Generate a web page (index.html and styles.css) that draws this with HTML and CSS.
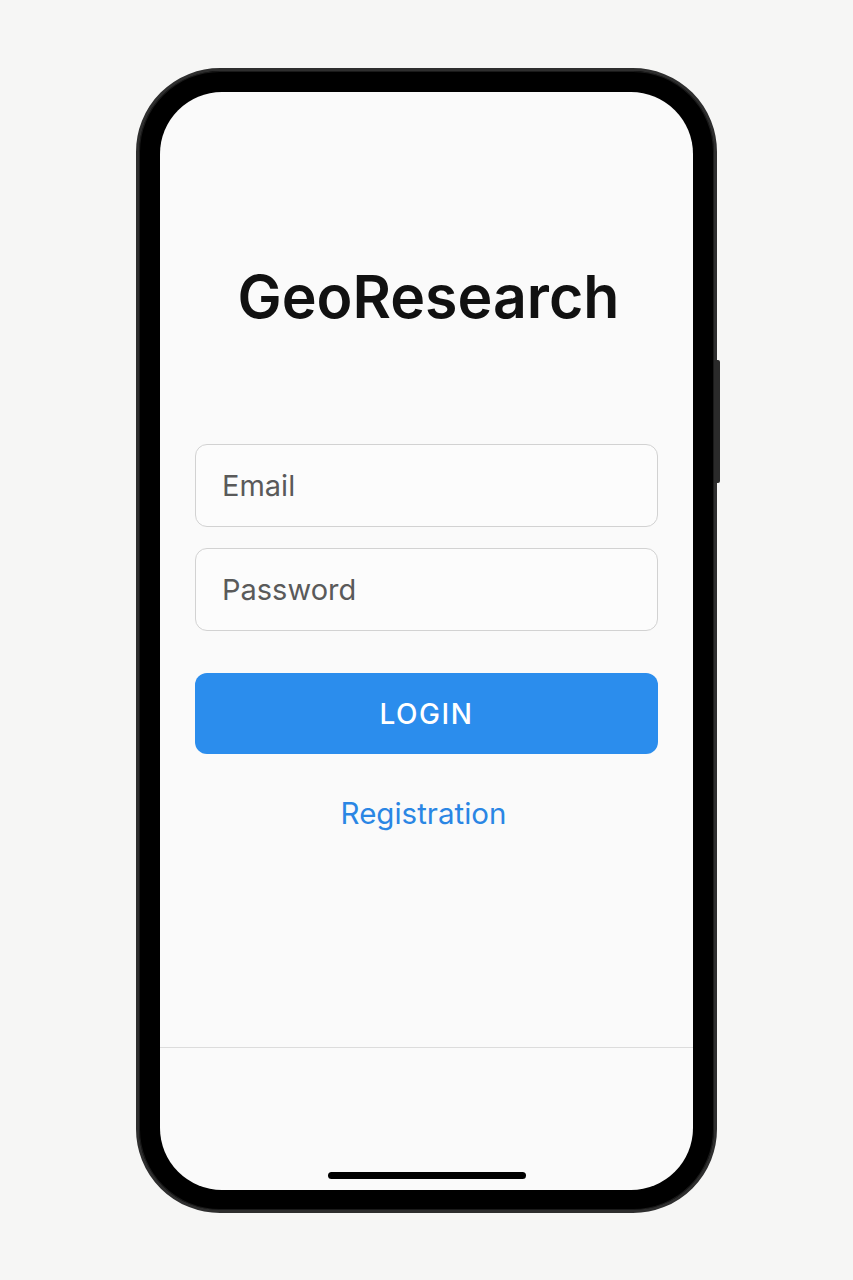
FILE: index.html
```html
<!DOCTYPE html>
<html lang="en">
<head>
<meta charset="utf-8">
<title>GeoResearch</title>
<link rel="stylesheet" href="styles.css">
</head>
<body>
<div class="stage">
  <div class="phone">
    <div class="side-button"></div>
    <div class="screen">
      <main class="content">
        <h1 class="title">GeoResearch</h1>
        <form class="form">
          <input class="field" type="email" placeholder="Email">
          <input class="field" type="password" placeholder="Password">
          <button class="login" type="button">LOGIN</button>
        </form>
        <a class="register" href="#">Registration</a>
      </main>
      <footer class="footer">
        <div class="home-indicator"></div>
      </footer>
    </div>
  </div>
</div>
</body>
</html>
```

FILE: styles.css
```css
* { box-sizing: border-box; }
html, body {
  margin: 0;
  padding: 0;
  background: #f6f6f5;
  font-family: Inter, "Noto Sans", "Liberation Sans", sans-serif;
}
.stage {
  display: flex;
  justify-content: center;
  padding-top: 68px;
}
.phone {
  position: relative;
  width: 581px;
  height: 1145px;
  border-radius: 84px;
  background: #000;
  border: 3px solid #2e2e2e;
  box-shadow: inset 0 0 0 1px #1a1a1a;
  padding: 21px 21px 20px 21px;
}
.side-button {
  position: absolute;
  right: -6px;
  top: 289px;
  width: 6px;
  height: 123px;
  background: #2a2a2a;
  border-radius: 0 2px 2px 0;
}
.screen {
  height: 100%;
  background: #fafafa;
  border-radius: 62px;
  display: flex;
  flex-direction: column;
  overflow: hidden;
}
.content {
  flex: 1;
  display: flex;
  flex-direction: column;
  align-items: center;
  padding: 0 35px 0 35px;
}
.title {
  margin: 169px 0 0 4px;
  font-size: 59px;
  line-height: 71px;
  font-weight: 600;
  color: #111;
}
.form {
  width: 100%;
  margin-top: 112px;
  display: flex;
  flex-direction: column;
  gap: 21px;
}
.field {
  width: 100%;
  height: 83px;
  border: 1.5px solid #d2d2d2;
  border-radius: 12px;
  background: #fcfcfc;
  padding: 0 26px;
  font-family: inherit;
  font-size: 29px;
  color: #555;
  outline: none;
}
.field::placeholder { color: #5a5a5a; }
.login {
  margin-top: 21px;
  height: 81px;
  width: 100%;
  border: none;
  border-radius: 12px;
  background: #2b8ded;
  color: #fff;
  font-family: inherit;
  font-size: 28px;
  font-weight: 500;
  letter-spacing: 1.6px;
}
.register {
  margin-top: 41px;
  margin-right: 6px;
  font-size: 29.5px;
  color: #2a86e4;
  text-decoration: none;
}
.footer {
  height: 143px;
  border-top: 1px solid #dcdcdc;
  display: flex;
  justify-content: center;
  align-items: flex-end;
  padding-bottom: 11px;
}
.home-indicator {
  width: 198px;
  height: 7px;
  border-radius: 4px;
  background: #000;
}
```
